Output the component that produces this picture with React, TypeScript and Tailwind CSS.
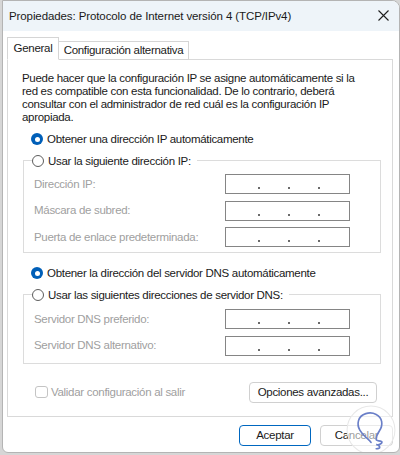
import React from "react";

const font = "font-['Liberation_Sans','Noto_Sans',sans-serif]";

const Radio: React.FC<{ checked?: boolean }> = ({ checked }) =>
    checked ? (
        <span className="w-[12px] h-[12px] rounded-full bg-[#005fb8] flex items-center justify-center shrink-0">
            <span className="w-[5px] h-[5px] rounded-full bg-white" />
        </span>
    ) : (
        <span className="w-[12px] h-[12px] rounded-full border border-[#5d5d5d] bg-white shrink-0" />
    );

const IpBox: React.FC = () => (
    <div className="w-[125px] h-[20px] border border-[#858585] bg-white flex items-end pl-[32px] gap-[28px] pb-[4px]">
        <span className="w-[2px] h-[2px] bg-[#6b6b6b]" />
        <span className="w-[2px] h-[2px] bg-[#6b6b6b]" />
        <span className="w-[2px] h-[2px] bg-[#6b6b6b]" />
    </div>
);

const Row: React.FC<{ label: string }> = ({ label }) => (
    <div className="flex items-center justify-between">
        <span className="text-[#a0a0a0] whitespace-nowrap">{label}</span>
        <IpBox />
    </div>
);

const Legend: React.FC<{ label: string }> = ({ label }) => (
    <div className="-mt-[8px] -ml-[2px] h-[16px] flex items-center gap-[4px] bg-white self-start pr-[6px] text-[#1a1a1a] whitespace-nowrap">
        <Radio />
        <span>{label}</span>
    </div>
);

export default function App() {
    return (
        <div className={`w-[400px] h-[455px] bg-[#d6d6d6] pl-[2px] text-[11.5px] leading-[13px] tracking-[-0.3px] ${font}`}>
            <div className="relative w-[398px] h-[453px] bg-white border border-[#b4b4b4] rounded-tr-[8px] rounded-b-[6px] overflow-hidden flex flex-col">
                {/* title bar */}
                <div className="h-[30px] bg-[#eef4f9] flex items-center justify-between pl-[6px] pr-[10px] shrink-0">
                    <span className="text-[11.5px] tracking-[-0.1px] text-[#1a1a1a] whitespace-nowrap">Propiedades: Protocolo de Internet versión 4 (TCP/IPv4)</span>
                    <svg width="11" height="11" viewBox="0 0 11 11" className="mt-[-1px]">
                        <path d="M0.5 0.5 L10.5 10.5 M10.5 0.5 L0.5 10.5" stroke="#1f1f1f" strokeWidth="1.1" />
                    </svg>
                </div>

                <div className="flex flex-col px-[4px] pr-[6px] pt-[6px]">
                    {/* tabs */}
                    <div className="flex items-end h-[23px] relative z-10 -mb-px whitespace-nowrap">
                        <div className="h-[23px] w-[52px] border border-[#d5d5d5] border-b-white bg-white flex items-center justify-center text-[#1a1a1a]">
                            General
                        </div>
                        <div className="h-[19px] w-[130px] border border-l-0 border-[#d5d5d5] bg-white flex items-center justify-center text-[#1a1a1a]">
                            Configuración alternativa
                        </div>
                    </div>

                    {/* panel */}
                    <div className="h-[358px] border border-[#d9d9d9] bg-white flex flex-col pt-[12px] text-[#1a1a1a]">
                        <p className="pl-[14px] whitespace-nowrap">
                            Puede hacer que la configuración IP se asigne automáticamente si la
                            <br />
                            red es compatible con esta funcionalidad. De lo contrario, deberá
                            <br />
                            consultar con el administrador de red cuál es la configuración IP
                            <br />
                            apropiada.
                        </p>

                        <div className="mt-[7px] ml-[23px] h-[16px] flex items-center gap-[4px] whitespace-nowrap">
                            <Radio checked />
                            <span>Obtener una dirección IP automáticamente</span>
                        </div>

                        <div className="mt-[13px] ml-[15px] mr-[11px] border border-[#dcdcdc] flex flex-col pl-[10px] pr-[30px] pb-[5px]">
                            <Legend label="Usar la siguiente dirección IP:" />
                            <div className="mt-[5px] flex flex-col gap-[6.5px]">
                                <Row label="Dirección IP:" />
                                <Row label="Máscara de subred:" />
                                <Row label="Puerta de enlace predeterminada:" />
                            </div>
                        </div>

                        <div className="mt-[12px] ml-[23px] h-[16px] flex items-center gap-[4px] whitespace-nowrap">
                            <Radio checked />
                            <span>Obtener la dirección del servidor DNS automáticamente</span>
                        </div>

                        <div className="mt-[13px] ml-[15px] mr-[11px] border border-[#dcdcdc] flex flex-col pl-[10px] pr-[30px] pb-[7px]">
                            <Legend label="Usar las siguientes direcciones de servidor DNS:" />
                            <div className="mt-[6px] flex flex-col gap-[6.5px]">
                                <Row label="Servidor DNS preferido:" />
                                <Row label="Servidor DNS alternativo:" />
                            </div>
                        </div>

                        <div className="mt-[18px] ml-[27px] mr-[15px] h-[21px] flex items-center justify-between">
                            <div className="flex items-center gap-[3px] text-[#a0a0a0] whitespace-nowrap">
                                <span className="w-[13px] h-[12px] rounded-[3px] border border-[#c4c4c4] bg-white" />
                                <span>Validar configuración al salir</span>
                            </div>
                            <button className="w-[128px] h-[21px] rounded-[4px] border border-[#d0d0d0] bg-white text-[#1a1a1a] text-[11.5px] whitespace-nowrap">
                                Opciones avanzadas...
                            </button>
                        </div>
                    </div>

                    {/* footer */}
                    <div className="mt-[8px] flex justify-end gap-[9px]">
                        <button className="w-[72px] h-[21px] rounded-[4px] border-[1.5px] border-[#0067c0] bg-white text-[#1a1a1a] text-[11.5px]">
                            Aceptar
                        </button>
                        <button className="w-[73px] h-[21px] rounded-[4px] border border-[#d0d0d0] bg-white text-[#1a1a1a] text-[11.5px]">
                            Cancelar
                        </button>
                    </div>
                </div>

                {/* watermark */}
                <svg className="absolute right-[2px] bottom-[-4px]" width="52" height="52" viewBox="0 0 50 50">
                    <circle cx="25" cy="25" r="23" fill="white" fillOpacity="0.55" stroke="#e8e8e8" strokeWidth="1" />
                    <path
                        d="M20 32 C16 28 11 23 13 16 C15 9 24 7 30 10 C36 13 37 20 33 26 C31 29 30 31 30 34 C30 36 33 35 35 36 C37 37 33 40 30 39 C34 40 35 43 30 43"
                        fill="none"
                        stroke="#6a7fc8"
                        strokeWidth="1.6"
                        strokeLinecap="round"
                    />
                    <path d="M20 32 C22 34 24 35 25 37" fill="none" stroke="#6a7fc8" strokeWidth="1.6" strokeLinecap="round" />
                </svg>
            </div>
        </div>
    );
}
